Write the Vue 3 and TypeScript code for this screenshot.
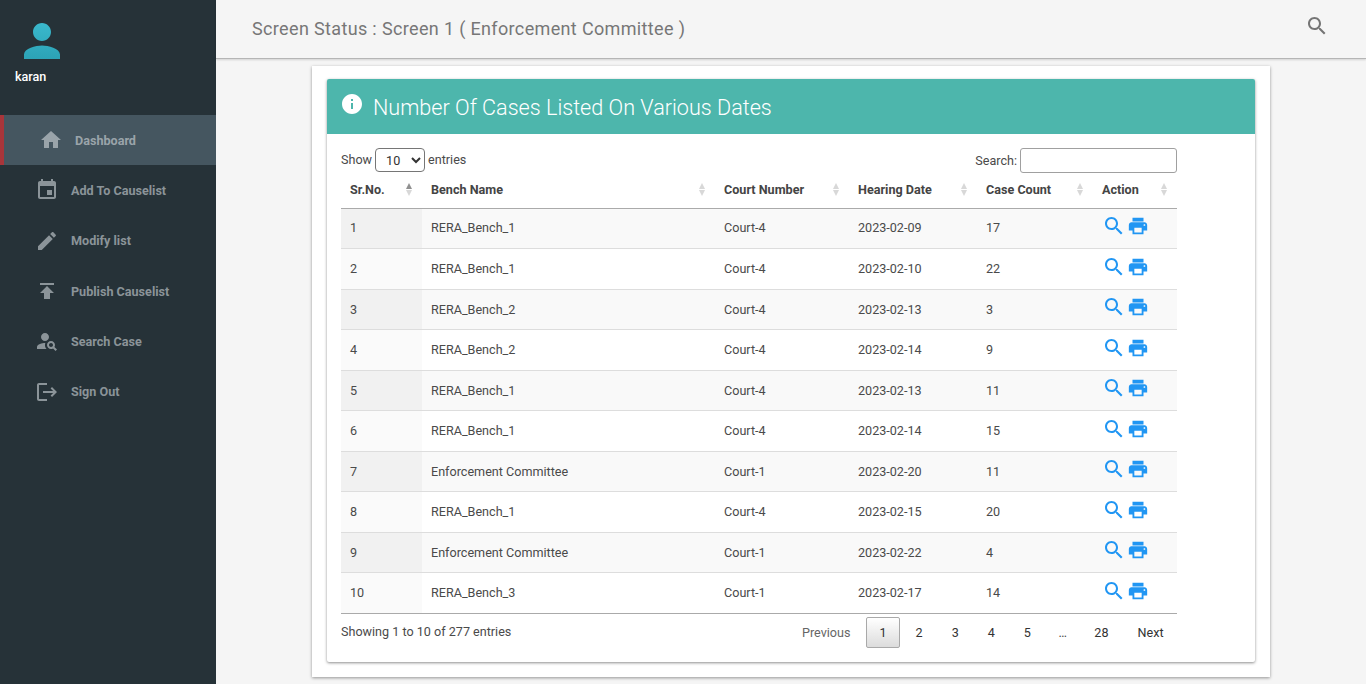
<template>
  <div class="app-shell">
    <aside class="sidebar">
      <div class="user">
        <svg class="avatar" viewBox="0 0 24 24">
          <defs>
            <linearGradient id="avatarFill" x1="0" y1="0" x2="0" y2="1">
              <stop offset="0" stop-color="#3ab8cc" />
              <stop offset="1" stop-color="#2ca3b6" />
            </linearGradient>
          </defs>
          <path fill="url(#avatarFill)" :d="icons.person" />
        </svg>
        <div class="user-name">karan</div>
      </div>
      <nav class="nav">
        <a v-for="item in navItems" :key="item.label" class="nav-item" :class="{ active: item.active }">
          <svg class="nav-icon" viewBox="0 0 24 24"><path :d="item.icon" /></svg>
          <span>{{ item.label }}</span>
        </a>
      </nav>
    </aside>

    <div class="content">
      <header class="topbar">
        <h1>Screen Status : Screen 1 ( Enforcement Committee )</h1>
        <svg class="topbar-search" viewBox="0 0 24 24"><path :d="icons.search" /></svg>
      </header>

      <main class="main">
        <section class="outer-card">
          <div class="card">
            <div class="card-header">
              <svg class="info-icon" viewBox="0 0 24 24"><path :d="icons.info" /></svg>
              <h2>Number Of Cases Listed On Various Dates</h2>
            </div>
            <div class="card-body">
              <div class="table-wrap">
                <div class="controls">
                  <label class="length">Show
                    <select>
                      <option>10</option>
                      <option>25</option>
                      <option>50</option>
                    </select>
                    entries</label>
                  <label class="search-box">Search:<input type="search" /></label>
                </div>
                <table>
                  <colgroup>
                    <col v-for="c in columns" :key="c.label" :style="{ width: c.width + 'px' }" />
                  </colgroup>
                  <thead>
                    <tr>
                      <th v-for="(c, i) in columns" :key="c.label">
                        {{ c.label }}
                        <span class="sort-up" :class="{ current: i === 0 }"></span>
                        <span class="sort-down"></span>
                      </th>
                    </tr>
                  </thead>
                  <tbody>
                    <tr v-for="(r, i) in rows" :key="i">
                      <td class="sorted">{{ i + 1 }}</td>
                      <td>{{ r[0] }}</td>
                      <td>{{ r[1] }}</td>
                      <td>{{ r[2] }}</td>
                      <td>{{ r[3] }}</td>
                      <td class="actions">
                        <div class="action-icons">
                          <svg class="act-search" viewBox="0 0 24 24"><path :d="icons.search" /></svg>
                          <svg class="act-print" viewBox="0 0 24 24"><path :d="icons.print" /></svg>
                        </div>
                      </td>
                    </tr>
                  </tbody>
                </table>
                <div class="table-footer">
                  <div class="info">Showing 1 to 10 of 277 entries</div>
                  <div class="pager">
                    <a class="page muted">Previous</a>
                    <a class="page current">1</a>
                    <a class="page">2</a>
                    <a class="page">3</a>
                    <a class="page">4</a>
                    <a class="page">5</a>
                    <span class="ellipsis">…</span>
                    <a class="page">28</a>
                    <a class="page">Next</a>
                  </div>
                </div>
              </div>
            </div>
          </div>
        </section>
      </main>
    </div>
  </div>
</template>

<script setup lang="ts">
const icons = {
  person: "M12 12c2.21 0 4-1.79 4-4s-1.79-4-4-4-4 1.79-4 4 1.79 4 4 4zm0 2c-2.67 0-8 1.34-8 4v2h16v-2c0-2.66-5.33-4-8-4z",
  home: "M10 20v-6h4v6h5v-8h3L12 3 2 12h3v8z",
  event: "M17 12h-5v5h5v-5zM16 1v2H8V1H6v2H5c-1.11 0-1.99.9-1.99 2L3 19c0 1.1.89 2 2 2h14c1.1 0 2-.9 2-2V5c0-1.1-.9-2-2-2h-1V1h-2zm3 18H5V8h14v11z",
  create: "M3 17.25V21h3.75L17.81 9.94l-3.75-3.75L3 17.25zM20.71 7.04c.39-.39.39-1.02 0-1.41l-2.34-2.34c-.39-.39-1.02-.39-1.41 0l-1.83 1.83 3.75 3.75 1.83-1.83z",
  publish: "M5 4v2h14V4H5zm0 10h4v6h6v-6h4l-7-7-7 7z",
  personSearch: "M10 12c2.21 0 4-1.79 4-4s-1.79-4-4-4-4 1.79-4 4 1.79 4 4 4zM10.35 14.01C7.62 13.91 2 15.27 2 18v2h9.54c-2.47-2.76-1.23-5.89-1.19-5.99zM19.43 18.02c.36-.59.57-1.28.57-2.02 0-2.21-1.79-4-4-4s-4 1.79-4 4 1.79 4 4 4c.74 0 1.43-.22 2.02-.57L20.59 22 22 20.59l-2.57-2.57zM16 18c-1.1 0-2-.9-2-2s.9-2 2-2 2 .9 2 2-.9 2-2 2z",
  logout: "M17 7l-1.41 1.41L18.17 11H8v2h10.17l-2.58 2.58L17 17l5-5zM4 5h8V3H4c-1.1 0-2 .9-2 2v14c0 1.1.9 2 2 2h8v-2H4V5z",
  search: "M15.5 14h-.79l-.28-.27C15.41 12.59 16 11.11 16 9.5 16 5.91 13.09 3 9.5 3S3 5.91 3 9.5 5.91 16 9.5 16c1.61 0 3.09-.59 4.23-1.57l.27.28v.79l5 4.99L20.49 19l-4.99-5zm-6 0C7.01 14 5 11.99 5 9.5S7.01 5 9.5 5 14 7.01 14 9.5 11.99 14 9.5 14z",
  print: "M19 8H5c-1.66 0-3 1.34-3 3v6h4v4h12v-4h4v-6c0-1.66-1.34-3-3-3zm-3 11H8v-5h8v5zm3-7c-.55 0-1-.45-1-1s.45-1 1-1 1 .45 1 1-.45 1-1 1zm-1-9H6v4h12V3z",
  info: "M12 2C6.48 2 2 6.48 2 12s4.48 10 10 10 10-4.48 10-10S17.52 2 12 2zm1 15h-2v-6h2v6zm0-8h-2V7h2v2z",
}

const navItems = [
  { label: "Dashboard", icon: icons.home, active: true },
  { label: "Add To Causelist", icon: icons.event },
  { label: "Modify list", icon: icons.create },
  { label: "Publish Causelist", icon: icons.publish },
  { label: "Search Case", icon: icons.personSearch },
  { label: "Sign Out", icon: icons.logout },
]

const columns = [
  { label: "Sr.No.", width: 81 },
  { label: "Bench Name", width: 293 },
  { label: "Court Number", width: 134 },
  { label: "Hearing Date", width: 128 },
  { label: "Case Count", width: 116 },
  { label: "Action", width: 84 },
]

const rows = [
  ["RERA_Bench_1", "Court-4", "2023-02-09", "17"],
  ["RERA_Bench_1", "Court-4", "2023-02-10", "22"],
  ["RERA_Bench_2", "Court-4", "2023-02-13", "3"],
  ["RERA_Bench_2", "Court-4", "2023-02-14", "9"],
  ["RERA_Bench_1", "Court-4", "2023-02-13", "11"],
  ["RERA_Bench_1", "Court-4", "2023-02-14", "15"],
  ["Enforcement Committee", "Court-1", "2023-02-20", "11"],
  ["RERA_Bench_1", "Court-4", "2023-02-15", "20"],
  ["Enforcement Committee", "Court-1", "2023-02-22", "4"],
  ["RERA_Bench_3", "Court-1", "2023-02-17", "14"],
]
</script>

<style>
html,
body {
  margin: 0;
  background: #f5f5f5;
}
</style>

<style scoped>
.app-shell {
  display: flex;
  height: 684px;
  overflow: hidden;
  font-family: Roboto, sans-serif;
  font-size: 12.6px;
  color: #4a4a4a;
}

.sidebar {
  width: 216px;
  flex: none;
  background: #263238;
}
.user {
  height: 115px;
  box-sizing: border-box;
  padding: 14px 0 0 15px;
}
.avatar {
  display: block;
  width: 54px;
  height: 54px;
}
.user-name {
  margin-top: 1px;
  color: #fff;
  font-weight: 500;
  font-size: 12.6px;
  line-height: 16px;
}
.nav-item {
  display: flex;
  align-items: center;
  gap: 12px;
  height: 50.3px;
  padding-left: 35px;
  color: #8b9499;
  font-weight: 700;
  font-size: 12.6px;
}
.nav-item.active {
  border-left: 4px solid #a8353a;
  background: #455660;
  color: #9aa4aa;
}
.nav-icon {
  width: 24px;
  height: 24px;
  fill: #8b9499;
  flex: none;
}
.nav-item.active .nav-icon {
  fill: #9aa4aa;
}

.content {
  flex: 1;
  min-width: 0;
  display: flex;
  flex-direction: column;
}
.topbar {
  height: 59px;
  flex: none;
  box-sizing: border-box;
  display: flex;
  align-items: center;
  justify-content: space-between;
  padding: 0 36px;
  background: #f5f5f5;
  border-bottom: 1px solid #b5b5b5;
  box-shadow: 0 1px 2px rgba(0, 0, 0, 0.15);
}
.topbar h1 {
  margin: -2px 0 0;
  font-size: 18px;
  font-weight: 400;
  letter-spacing: 0.35px;
  color: #777;
}
.topbar-search {
  width: 24px;
  height: 24px;
  fill: #757575;
  margin: -7px 1px 0 0;
}

.main {
  padding-top: 7px;
}
.outer-card {
  width: 958px;
  box-sizing: border-box;
  margin: 0 auto;
  padding: 13px 15px 15px;
  background: #fff;
  box-shadow: 0 1px 3px rgba(0, 0, 0, 0.4);
}
.card {
  background: #fff;
  border-radius: 2px;
  box-shadow: 0 1px 3px rgba(0, 0, 0, 0.45);
}
.card-header {
  height: 55px;
  display: flex;
  align-items: center;
  padding-left: 13px;
  background: #4db6ac;
  border-radius: 2px 2px 0 0;
}
.info-icon {
  width: 24px;
  height: 24px;
  fill: #fff;
  margin: -5px 9px 0 0;
}
.card-header h2 {
  margin: 1px 0 0;
  font-size: 21.6px;
  font-weight: 300;
  color: #fff;
}
.card-body {
  padding: 14px 14px 14px;
}
.table-wrap {
  width: 836px;
}
.controls {
  display: flex;
  justify-content: space-between;
  align-items: flex-start;
  height: 24px;
}
.length {
  display: flex;
  align-items: center;
  gap: 3px;
  height: 24px;
  padding-bottom: 2px;
  box-sizing: border-box;
}
.controls select {
  flex: none;
  width: 50px;
  height: 24px;
  margin: 2px 0 0;
  padding: 0 0 0 6px;
  font-family: Roboto, sans-serif;
  font-size: 12.6px;
  color: #333;
  background: #fff;
  border: 1px solid #767676;
  border-radius: 4px;
}
.search-box {
  display: flex;
  align-items: center;
  gap: 3px;
}
.search-box input {
  width: 157px;
  height: 25px;
  box-sizing: border-box;
  background: #fff;
  border: 1px solid #a0a0a0;
  border-radius: 3px;
}

table {
  width: 836px;
  table-layout: fixed;
  border-collapse: separate;
  border-spacing: 0;
}
th {
  position: relative;
  height: 36.5px;
  box-sizing: border-box;
  padding: 0 9px;
  text-align: left;
  font-weight: 700;
  color: #444;
  border-bottom: 1px solid #aaa;
}
td {
  height: 40.55px;
  box-sizing: border-box;
  padding: 0 9px 0.6px;
  color: #4a4a4a;
  border-bottom: 1px solid #ddd;
}
tbody tr:nth-child(odd) {
  background: #f9f9f9;
}
tbody tr:nth-child(odd) .sorted {
  background: #f1f1f1;
}
tbody tr:nth-child(even) .sorted {
  background: #fafafa;
}
tbody tr:last-child td {
  border-bottom-color: #aaa;
}
.sort-up,
.sort-down {
  position: absolute;
  right: 10.5px;
  width: 0;
  height: 0;
  border-left: 3.5px solid transparent;
  border-right: 3.5px solid transparent;
}
.sort-up {
  top: 11px;
  border-bottom: 6px solid #d8d8d8;
}
.sort-up.current {
  border-bottom-color: #909090;
}
.sort-down {
  top: 18px;
  border-top: 6px solid #d8d8d8;
}
.action-icons {
  display: flex;
  align-items: flex-start;
  gap: 1px;
  margin-top: -3px;
}
.act-search {
  width: 24px;
  height: 24px;
  fill: #2196f3;
  margin-top: -1px;
}
.act-print {
  width: 22px;
  height: 22px;
  fill: #2196f3;
}

.table-footer {
  display: flex;
  justify-content: space-between;
  align-items: flex-start;
  padding-top: 3px;
}
.info {
  padding-top: 7px;
}
.pager {
  display: flex;
  align-items: center;
}
.page {
  box-sizing: border-box;
  height: 31px;
  padding: 0 12.5px;
  margin-left: 2px;
  line-height: 29px;
  border: 1px solid transparent;
  border-radius: 2px;
  color: #333;
}
.page.muted {
  color: #666;
}
.page.current {
  border-color: #a9a9a9;
  background: linear-gradient(to bottom, #fff, #dcdcdc);
}
.ellipsis {
  padding: 0 12px;
  margin-left: 2px;
}
</style>
